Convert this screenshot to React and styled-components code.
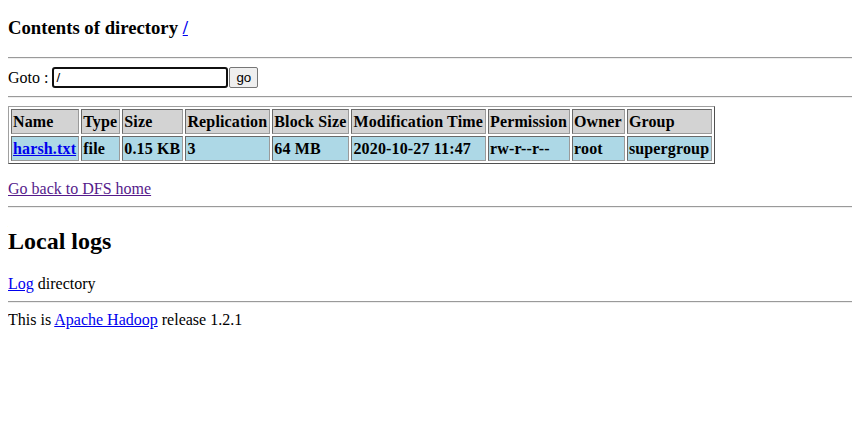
import React from "react";
import styled, { createGlobalStyle } from "styled-components";

// no right margin: the rules run to the window edge
const GlobalStyle = createGlobalStyle`
  body {
    margin: 8px 0 8px 8px;
    font-family: "Liberation Serif", "Times New Roman", serif;
    font-size: 16px;
    color: #000;
    background: #fff;
  }
`;

const Title = styled.h3`
  font-size: 18.72px;
  font-weight: bold;
  margin: 9px 0 18px;
`;

const SubTitle = styled.h2`
  font-size: 24px;
  font-weight: bold;
  margin: 19.92px 0;
`;

const Link = styled.a`
  color: ${(p) => (p.$visited ? "#551a8b" : "#0000ee")};
  text-decoration: underline;
  cursor: pointer;
`;

const Rule = styled.hr`
  border: none;
  border-top: 1px solid #9a9a9a;
  border-bottom: 1px solid #eee;
  margin: 8px 0;
  height: 0;
`;

const GotoForm = styled.form`
  display: flex;
  align-items: center;
  margin: 0;
  height: 21px;
`;

const DirInput = styled.input`
  width: 168px;
  height: 15px;
  margin-left: 4px;
  padding: 1px 2px;
  border: 2px solid #101010;
  border-radius: 3px;
  font-family: Arial, "Liberation Sans", sans-serif;
  font-size: 13.33px;
  outline: none;
`;

const GoButton = styled.button`
  height: 21px;
  margin-left: 1px;
  padding: 1px 6px;
  border: 1px solid #767676;
  border-radius: 2px;
  background: #efefef;
  font-family: Arial, "Liberation Sans", sans-serif;
  font-size: 13.33px;
  color: #000;
`;

const FileTable = styled.table`
  margin-top: 8px;
  border: 1px solid;
  border-color: #a0a0a0 #505050 #505050 #a0a0a0;
  border-spacing: 2px;
  font-weight: bold;
  letter-spacing: 0.15px;
`;

const Cell = styled.td`
  background: ${(p) => (p.$head ? "#d3d3d3" : "#add8e6")};
  border: 1px solid;
  border-color: #6a6a6a #9a9a9a #9a9a9a #6a6a6a;
  padding: 1px 2px 1px 1px;
  text-align: left;
  white-space: nowrap;
  height: 21px;
`;

const BackLine = styled.div`
  margin-top: 16px;
`;

const Plain = styled.div`
  margin: 0;
`;

const heads = [
  "Name",
  "Type",
  "Size",
  "Replication",
  "Block Size",
  "Modification Time",
  "Permission",
  "Owner",
  "Group",
];

const row = ["file", "0.15 KB", "3", "64 MB", "2020-10-27 11:47", "rw-r--r--", "root", "supergroup"];

export default function App() {
  return (
    <>
      <GlobalStyle />
      <Title>
        Contents of directory <Link>/</Link>
      </Title>
      <Rule />
      <GotoForm>
        Goto : <DirInput defaultValue="/" /> <GoButton type="button">go</GoButton>
      </GotoForm>
      <Rule />
      <FileTable>
        <tbody>
          <tr>
            {heads.map((h) => (
              <Cell as="th" $head key={h}>
                {h}
              </Cell>
            ))}
          </tr>
          <tr>
            <Cell>
              <Link>harsh.txt</Link>
            </Cell>
            {row.map((c, i) => (
              <Cell key={i}>{c}</Cell>
            ))}
          </tr>
        </tbody>
      </FileTable>
      <BackLine>
        <Link $visited>Go back to DFS home</Link>
      </BackLine>
      <Rule />
      <SubTitle>Local logs</SubTitle>
      <Plain>
        <Link>Log</Link> directory
      </Plain>
      <Rule />
      <Plain>
        This is <Link>Apache Hadoop</Link> release 1.2.1
      </Plain>
    </>
  );
}
